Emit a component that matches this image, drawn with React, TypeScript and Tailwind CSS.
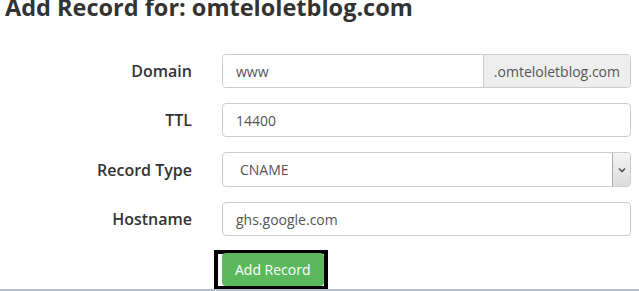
import React from "react";

type FieldProps = {
  label: string;
  children: React.ReactNode;
};

const Field: React.FC<FieldProps> = ({ label, children }) => (
  <div className="grid grid-cols-[192px_409px] gap-x-[30px] items-center">
    <label className="text-right text-[16px] font-semibold text-[#333]">
      {label}
    </label>
    {children}
  </div>
);

const inputClass =
  "h-[34px] w-full rounded-[4px] border border-[#ccc] bg-white px-[13px] text-[14px] text-[#555] flex items-center";

export default function App() {
  return (
    <div className="relative h-[291px] w-[639px] overflow-hidden bg-white font-['Open_Sans',sans-serif]">
      <h2 className="mt-[-8px] pl-[5px] text-[23.5px] leading-[30px] font-bold text-[#333]">
        Add Record for: omteloletblog.com
      </h2>

      <div className="mt-[32px] flex flex-col gap-[15px]">
        <Field label="Domain">
          <div className="flex h-[34px] w-full overflow-hidden rounded-[4px] border border-[#ccc] text-[14px] text-[#555]">
            <div className="flex flex-1 items-center bg-white px-[13px]">www</div>
            <div className="flex items-center border-l border-[#ccc] bg-[#eee] px-[10px]">
              .omteloletblog.com
            </div>
          </div>
        </Field>

        <Field label="TTL">
          <div className={inputClass}>14400</div>
        </Field>

        <Field label="Record Type">
          <div className="flex h-[35px] w-full overflow-hidden rounded-[4px] border border-[#ccc] bg-white text-[14px] text-[#555]">
            <div className="flex flex-1 items-center pl-[17px]">CNAME</div>
            <div className="flex w-[18px] items-center justify-center border-l border-[#aaa] bg-gradient-to-b from-[#f4f4f4] to-[#dcdcdc]">
              <svg width="8" height="6" viewBox="0 0 8 6">
                <path d="M1 1.5 L4 4.5 L7 1.5" fill="none" stroke="#555" strokeWidth="1.6" />
              </svg>
            </div>
          </div>
        </Field>

        <Field label="Hostname">
          <div className={inputClass}>ghs.google.com</div>
        </Field>

        <div className="grid grid-cols-[192px_auto] gap-x-[22px]">
          <div />
          <div className="-mt-[1px] flex w-fit border-[4px] border-black pl-[4px] pt-0">
            <button className="-mt-[1px] h-[33px] rounded-[4px] bg-[#5cb85c] px-[13px] text-[14px] text-white">
              Add Record
            </button>
          </div>
        </div>
      </div>

      <div className="absolute bottom-0 left-0 h-[2px] w-full bg-[#b3c1cf]" />
    </div>
  );
}
